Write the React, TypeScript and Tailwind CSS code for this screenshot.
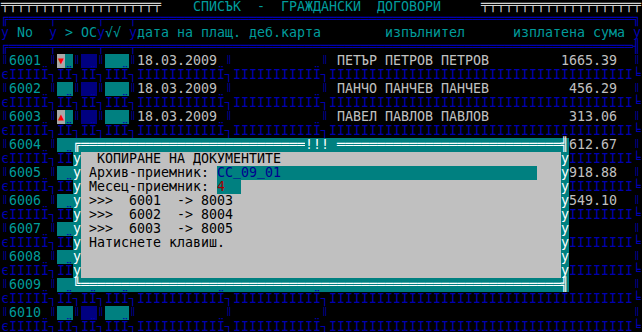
import React from "react";

const S = {
  k: "text-[#c0c0c0]",
  t: "text-[#009c9c]",
  h: "text-[#009c9c] pt-[2px]",
  b: "text-[#0000b0]",
  d: "text-[#d4d4d4]",
  T: "bg-[#008080]",
  N: "bg-[#000080]",
  G: "bg-[#a8a8a8] text-[#ff0000] text-[10px] items-center",
  W: "bg-[#008080] text-white",
  D: "bg-[#c0c0c0] text-black",
  F: "bg-[#008080] text-[#000090]",
  U: "bg-[#008080] text-[#000090] leading-[10px]",
  R: "bg-[#008080] text-[#a00000]",
  s: "text-[#0000b0] text-[8px] leading-[8px] pt-[2px]",
} as const;
type Sty = keyof typeof S;
type Cell = { c: string; s: Sty };

const blank = (): Cell[] => Array.from({ length: 80 }, () => ({ c: " ", s: "k" as Sty }));
const put = (r: Cell[], col: number, text: string, s: Sty) => {
  Array.from(text).forEach((ch, i) => {
    if (col + i < 80) r[col + i] = { c: ch, s };
  });
};
const fill = (r: Cell[], from: number, to: number, ch: string, s: Sty) => {
  for (let c = from; c <= to; c++) r[c] = { c: ch, s };
};

const SEPS = [6, 9, 12, 16, 28, 40];

function sepLine(): Cell[] {
  const r = blank();
  for (let c = 0; c < 80; c++) {
    let ch = "I";
    if (c === 0) ch = "є";
    else if (c === 79) ch = "╘";
    else if (SEPS.includes(c)) ch = "┐";
    else if (SEPS.includes(c + 1)) ch = "Ï";
    r[c] = { c: ch, s: "b" };
  }
  return r;
}

function dataLine(no: string, marker: string, date: string, name: string, amount: string): Cell[] {
  const r = blank();
  [0, 6, 9, 12, 16, 28, 40, 79].forEach((c) => put(r, c, "‖", "s"));
  put(r, 1, no, "t");
  put(r, 7, "  ", "T");
  if (marker) r[7] = { c: marker, s: "G" };
  put(r, 10, "  ", "N");
  put(r, 13, "   ", "T");
  if (date) put(r, 17, date, "k");
  if (name) put(r, 42, name, "k");
  if (amount) put(r, 77 - amount.length, amount, "k");
  return r;
}

const DATA: [string, string, string, string, string][] = [
  ["6001", "▼", "18.03.2009", "ПЕТЪР ПЕТРОВ ПЕТРОВ", "1665.39"],
  ["6002", "", "18.03.2009", "ПАНЧО ПАНЧЕВ ПАНЧЕВ", "456.29"],
  ["6003", "▲", "18.03.2009", "ПАВЕЛ ПАВЛОВ ПАВЛОВ", "313.06"],
  ["6004", "", "", "", "1612.67"],
  ["6005", "", "", "", "1918.88"],
  ["6006", "", "", "", "1549.10"],
  ["6007", "", "", "", ""],
  ["6008", "", "", "", ""],
  ["6009", "", "", "", ""],
  ["6010", "", "", "", ""],
];

function buildScreen(): Cell[][] {
  const rows: Cell[][] = [];
  // row 0: title
  const r0 = blank();
  fill(r0, 0, 19, "╤", "d");
  put(r0, 24, "СПИСЪК  -  ГРАЖДАНСКИ  ДОГОВОРИ", "h");
  fill(r0, 60, 79, "╤", "d");
  rows.push(r0);
  // row 1: top border
  const r1 = blank();
  fill(r1, 0, 79, "═", "b");
  r1[0] = { c: "╔", s: "b" };
  [6, 12, 16].forEach((c) => (r1[c] = { c: "╤", s: "b" }));
  r1[79] = { c: "╗", s: "b" };
  rows.push(r1);
  // row 2: header
  const r2 = blank();
  [0, 6, 12, 16, 79].forEach((c) => put(r2, c, "у", "b"));
  put(r2, 2, "No", "t");
  put(r2, 8, ">", "t");
  put(r2, 10, "ОС", "t");
  put(r2, 13, "√√", "t");
  put(r2, 17, "дата на плащ. деб.карта", "t");
  put(r2, 48, "изпълнител", "t");
  put(r2, 64, "изплатена сума", "t");
  rows.push(r2);
  // row 3: header separator
  const r3 = blank();
  fill(r3, 0, 79, "═", "b");
  r3[0] = { c: "╔", s: "b" };
  [6, 12, 16].forEach((c) => (r3[c] = { c: "╤", s: "b" }));
  r3[79] = { c: "╢", s: "b" };
  rows.push(r3);
  DATA.forEach((d) => {
    rows.push(dataLine(d[0], d[1], d[2], d[3], d[4]));
    rows.push(sepLine());
  });

  // dialog overlay rows 10..20, cols 9..70
  for (let i = 10; i <= 20; i++) {
    const r = rows[i];
    if (i === 10) {
      r[9] = { c: "╔", s: "W" };
      fill(r, 10, 37, "═", "W");
      put(r, 38, "!!! ", "W");
      fill(r, 42, 69, "═", "W");
      r[70] = { c: "╣", s: "W" };
    } else if (i === 20) {
      r[9] = { c: "╚", s: "W" };
      fill(r, 10, 69, "═", "W");
      r[70] = { c: "╣", s: "W" };
    } else {
      r[9] = { c: "у", s: "W" };
      fill(r, 10, 69, " ", "D");
      r[70] = { c: "у", s: "W" };
    }
  }
  put(rows[11], 12, "КОПИРАНЕ НА ДОКУМЕНТИТЕ", "D");
  put(rows[12], 11, "Архив-приемник:", "D");
  put(rows[12], 27, "CC_09_01".padEnd(40, " "), "F");
  rows[12][29] = { c: "_", s: "U" };
  rows[12][32] = { c: "_", s: "U" };
  put(rows[13], 11, "Месец-приемник:", "D");
  put(rows[13], 27, "4  ", "R");
  put(rows[14], 11, ">>>  6001  -> 8003", "D");
  put(rows[15], 11, ">>>  6002  -> 8004", "D");
  put(rows[16], 11, ">>>  6003  -> 8005", "D");
  put(rows[17], 11, "Натиснете клавиш.", "D");
  return rows;
}

const SCREEN = buildScreen();

export default function App() {
  return (
    <div className="w-[642px] h-[332px] overflow-hidden bg-black">
      <div className="mt-[-2px] pl-px font-['DejaVu_Sans_Mono',monospace] text-[13.3px] leading-[14px]">
        {SCREEN.map((row, i) => (
          <div key={i} className="flex h-[14px]">
            {row.map((cell, j) => (
              <span
                key={j}
                className={"flex w-2 h-[14px] shrink-0 justify-center whitespace-pre " + S[cell.s]}
              >
                {cell.c}
              </span>
            ))}
          </div>
        ))}
      </div>
    </div>
  );
}
